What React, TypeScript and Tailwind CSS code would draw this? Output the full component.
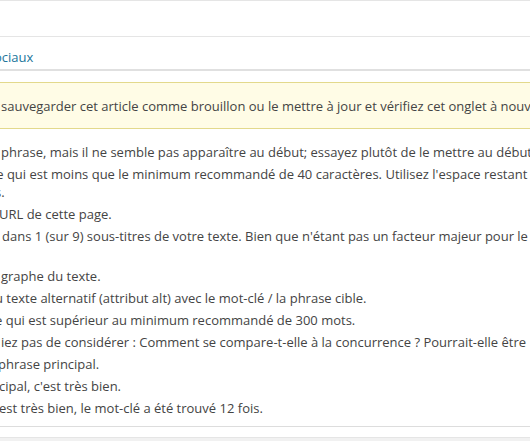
import React from "react"

type Row = {
    text: string
    shift: string
}

type Item = {
    lines: Row[]
}

const items: Item[] = [
    { lines: [{ text: "phrase, mais il ne semble pas apparaître au début; essayez plutôt de le mettre au début.", shift: "ml-[1px]" }] },
    {
        lines: [
            { text: "ce qui est moins que le minimum recommandé de 40 caractères. Utilisez l'espace restant pour", shift: "-ml-[10px]" },
            { text: "s.", shift: "-ml-[5px]" },
        ],
    },
    { lines: [{ text: "URL de cette page.", shift: "-ml-[1px]" }] },
    {
        lines: [
            { text: "dans 1 (sur 9) sous-titres de votre texte. Bien que n'étant pas un facteur majeur pour le", shift: "ml-[2px]" },
            { text: "\u00a0", shift: "ml-0" },
        ],
    },
    { lines: [{ text: "graphe du texte.", shift: "ml-[1px]" }] },
    { lines: [{ text: "u texte alternatif (attribut alt) avec le mot-clé / la phrase cible.", shift: "-ml-[5px]" }] },
    { lines: [{ text: "e qui est supérieur au minimum recommandé de 300 mots.", shift: "-ml-[5px]" }] },
    { lines: [{ text: "iez pas de considérer : Comment se compare-t-elle à la concurrence ? Pourrait-elle être", shift: "ml-[1px]" }] },
    { lines: [{ text: "phrase principal.", shift: "-ml-[2px]" }] },
    { lines: [{ text: "cipal, c'est très bien.", shift: "-ml-[1px]" }] },
    { lines: [{ text: "est très bien, le mot-clé a été trouvé 12 fois.", shift: "-ml-[1px]" }] },
]

export default function App() {
    return (
        <main className="h-[441px] w-[530px] overflow-hidden bg-white font-['Open_Sans',sans-serif] text-[13px] text-[#444]">
            <div className="h-[37px] border-y border-[#e5e5e5]" />

            <div className="flex h-[34px] items-end border-b-2 border-[#e0e0e0] pb-[1px]">
                <a className="-ml-[6px] whitespace-nowrap leading-[22px] text-[#21759b]">ociaux</a>
            </div>

            <div className="mt-[11px] flex h-[47px] items-center border-y border-[#e3d98c] bg-[#fffce6] pt-[3px]">
                <p className="ml-[1px] whitespace-nowrap">
                    sauvegarder cet article comme brouillon ou le mettre à jour et vérifiez cet onglet à nouveau.
                </p>
            </div>

            <ul className="flex h-[298px] flex-col gap-[4px] border-b border-[#dddddd] pt-[14px]">
                {items.map((item, i) => (
                    <li key={i} className="leading-[18px]">
                        {item.lines.map((row, j) => (
                            <div key={j} className={`whitespace-nowrap ${row.shift}`}>
                                {row.text}
                            </div>
                        ))}
                    </li>
                ))}
            </ul>

            <div className="h-[11px] border-b border-[#e5e5e5]" />
            <div className="h-[10px] bg-[#f1f1f1]" />
        </main>
    )
}
